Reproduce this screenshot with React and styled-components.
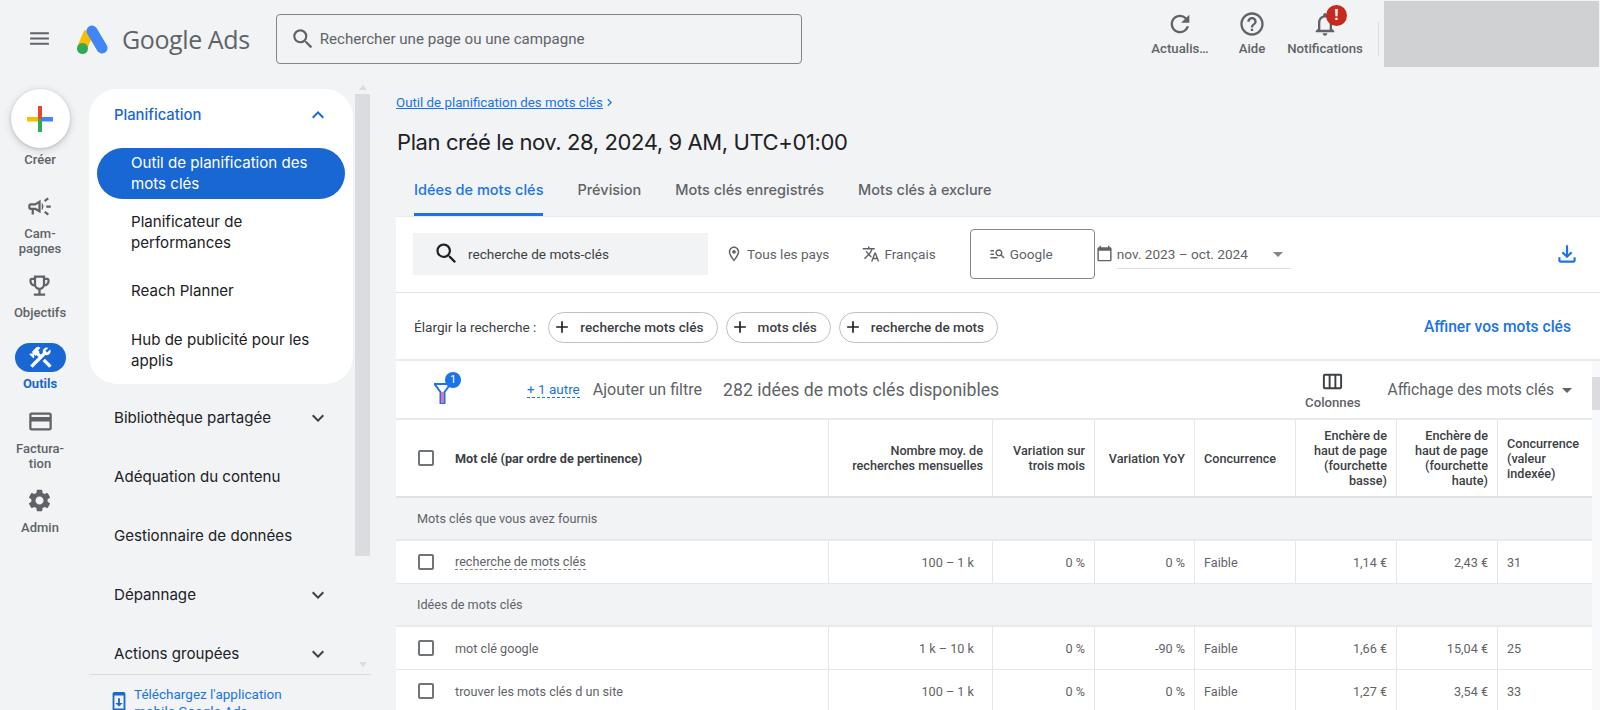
import React from 'react';
import styled, { createGlobalStyle } from 'styled-components';
import {
  MdMenu,
  MdSearch,
  MdRefresh,
  MdHelpOutline,
  MdOutlineNotifications,
  MdOutlineCampaign,
  MdOutlineEmojiEvents,
  MdConstruction,
  MdCreditCard,
  MdSettings,
  MdExpandLess,
  MdExpandMore,
  MdSystemUpdate,
  MdChevronRight,
  MdOutlineLocationOn,
  MdTranslate,
  MdOutlineManageSearch,
  MdCalendarToday,
  MdArrowDropDown,
  MdOutlineFileDownload,
  MdAdd,
  MdOutlineViewWeek,
} from 'react-icons/md';

const GlobalStyle = createGlobalStyle`
  html, body {
    margin: 0;
    padding: 0;
    height: 100%;
    overflow: hidden;
    background: #f1f3f5;
    font-family: Roboto, "Liberation Sans", sans-serif;
  }
  * { box-sizing: border-box; }
`;

const TITLE_FONT = `Inter, "Noto Sans", Roboto, sans-serif`;

const Page = styled.div`
  width: 1600px;
  height: 710px;
  overflow: hidden;
  display: flex;
  flex-direction: column;
  background: #f1f3f5;
`;

/* top bar */
const TopBar = styled.header`
  height: 68px;
  flex: none;
  display: flex;
  align-items: center;
  padding-left: 27px;
`;

const MenuButton = styled.div`
  display: flex;
  color: #5f6368;
  font-size: 25px;
  margin-top: 9px;
`;

const LogoWrap = styled.div`
  display: flex;
  align-items: center;
  margin-left: 25px;
  margin-top: 9px;
`;

const LogoText = styled.span`
  font-family: "Open Sans", sans-serif;
  font-size: 25px;
  font-weight: 500;
  letter-spacing: -0.4px;
  color: #5f6368;
  margin-left: 13px;
`;

const SearchBox = styled.div`
  width: 526px;
  height: 50px;
  margin-left: 26px;
  margin-top: 10px;
  border: 1px solid #80868b;
  border-radius: 4px;
  display: flex;
  align-items: center;
  padding-left: 13px;
  color: #5f6368;
  font-size: 15.1px;
  gap: 4px;
`;

const TopActions = styled.div`
  margin-left: auto;
  display: flex;
  align-items: flex-start;
  height: 100%;
  padding-top: 1px;
`;

const TopAction = styled.div`
  position: relative;
  width: ${(p) => p.$w}px;
  margin-top: 9px;
  display: flex;
  flex-direction: column;
  align-items: center;
  color: #5f6368;
  font-size: 13.2px;
  font-weight: 500;
  line-height: 16px;
  gap: 3px;
  svg { font-size: 28px; }
`;

const AlertBadge = styled.span`
  position: absolute;
  top: -5px;
  left: 40px;
  width: 21px;
  height: 21px;
  border-radius: 50%;
  background: #c5291f;
  color: #fff;
  font-size: 14px;
  font-weight: 900;
  line-height: 21px;
  text-align: center;
`;

const TopDivider = styled.div`
  width: 1px;
  height: 34px;
  margin: 21px 5px 0 14px;
  background: #dadce0;
`;

const AccountBlock = styled.div`
  width: 215px;
  height: 66px;
  margin-right: 1px;
  background: #d0d1d3;
`;

/* body */
const Body = styled.div`
  flex: 1;
  min-height: 0;
  display: flex;
`;

const Rail = styled.nav`
  width: 78px;
  flex: none;
  padding-top: 21px;
  margin-left: 1px;
  display: flex;
  flex-direction: column;
  align-items: center;
  gap: 17px;
`;

const CreateItem = styled.div`
  display: flex;
  flex-direction: column;
  align-items: center;
  gap: 4px;
  margin-bottom: 10px;
`;

const CreateButton = styled.div`
  width: 59px;
  height: 59px;
  border-radius: 50%;
  background: #fff;
  display: flex;
  align-items: center;
  justify-content: center;
  box-shadow: 0 1px 3px rgba(60, 64, 67, 0.22), 0 2px 6px 2px rgba(60, 64, 67, 0.12);
`;

const RailItem = styled.div`
  display: flex;
  flex-direction: column;
  align-items: center;
  gap: ${(p) => (p.$active ? 4 : 8)}px;
  margin-top: ${(p) => (p.$active ? 6 : 0)}px;
  margin-bottom: ${(p) => (p.$active ? 1 : 0)}px;
  color: #5f6368;
  svg { font-size: 27px; display: block; }
`;

const RailLabel = styled.span`
  font-size: 13px;
  line-height: 15px;
  text-align: center;
  color: ${(p) => (p.$active ? '#1967d2' : '#5f6368')};
  font-weight: ${(p) => (p.$active ? 700 : 500)};
`;

const IconBox = styled.div`
  height: 24px;
  display: flex;
  align-items: center;
  justify-content: center;
`;

const ActivePill = styled.div`
  width: 51px;
  height: 29px;
  border-radius: 15px;
  background: #1967d2;
  color: #fff;
  display: flex;
  align-items: center;
  justify-content: center;
`;

/* secondary nav */
const NavColumn = styled.div`
  width: 282px;
  flex: none;
  margin-left: 10px;
  display: flex;
  flex-direction: column;
`;

const NavTop = styled.div`
  height: 606px;
  flex: none;
  display: flex;
  overflow: hidden;
`;

const NavItems = styled.div`
  width: 264px;
  flex: none;
  padding-top: 21px;
  font-family: ${TITLE_FONT};
`;

const NavCard = styled.div`
  background: #fff;
  border-radius: 28px;
  padding-bottom: 8px;
`;

const NavHead = styled.div`
  height: 51px;
  margin-bottom: 8px;
  display: flex;
  align-items: center;
  justify-content: space-between;
  padding: 0 23px 0 25px;
  font-size: 14.8px;
  font-weight: 500;
  color: #1967d2;
  svg { font-size: 24px; }
`;

const SubItem = styled.div`
  height: 51px;
  margin: 0 8px 8px;
  padding: 0 20px 2px 34px;
  border-radius: 26px;
  display: flex;
  align-items: center;
  font-size: 15.1px;
  line-height: 21px;
  color: ${(p) => (p.$active ? '#fff' : '#202124')};
  background: ${(p) => (p.$active ? '#1967d2' : 'transparent')};
  &:last-child { margin-bottom: 0; }
`;

const NavRow = styled.div`
  height: 59px;
  display: flex;
  align-items: center;
  justify-content: space-between;
  padding: 0 23px 0 25px;
  font-size: 15.1px;
  color: #202124;
  svg { font-size: 24px; color: #3c4043; }
`;

const NavRows = styled.div`
  margin-top: 4px;
`;

const NavScroll = styled.div`
  width: 15px;
  margin-left: 2px;
  padding-top: 17px;
  display: flex;
  flex-direction: column;
  align-items: center;
`;

const ScrollArrow = styled.div`
  width: 0;
  height: 0;
  border-left: 4px solid transparent;
  border-right: 4px solid transparent;
  border-bottom: ${(p) => (p.$up ? '5px solid #dadce0' : 'none')};
  border-top: ${(p) => (p.$up ? 'none' : '5px solid #dadce0')};
`;

const NavThumb = styled.div`
  width: 15px;
  height: 462px;
  margin: 4px 0 106px;
  background: #dadce0;
`;

const NavFooter = styled.div`
  border-top: 1px solid #dadce0;
  padding: 11px 0 0 19px;
  display: flex;
  gap: 4px;
  color: #1a73e8;
  font-size: 13.5px;
  line-height: 17px;
  svg { font-size: 22px; margin-top: 5px; flex: none; color: #1967d2; }
`;

/* main */
const Main = styled.main`
  flex: 1;
  min-width: 0;
  margin-left: 25px;
  display: flex;
  flex-direction: column;
`;

const Breadcrumb = styled.div`
  margin-top: 25px;
  height: 18px;
  display: flex;
  align-items: center;
  font-size: 13.3px;
  color: #1a73e8;
  span { text-decoration: underline; }
  svg { font-size: 15px; margin-left: -1px; }
`;

const PageTitle = styled.h1`
  margin: 15px 0 0 1px;
  font-family: ${TITLE_FONT};
  font-size: 22px;
  letter-spacing: -0.4px;
  font-weight: 400;
  line-height: 32px;
  color: #202124;
`;

const Tabs = styled.div`
  margin-top: 10px;
  height: 48px;
  flex: none;
  display: flex;
  gap: 34px;
  padding-left: 18px;
`;

const Tab = styled.div`
  height: 48px;
  padding-bottom: 3px;
  display: flex;
  align-items: center;
  font-family: ${TITLE_FONT};
  font-size: 14.5px;
  font-weight: 500;
  color: ${(p) => (p.$active ? '#1a73e8' : '#5f6368')};
  border-bottom: 3px solid ${(p) => (p.$active ? '#1a73e8' : 'transparent')};
`;

const Panel = styled.section`
  flex: 1;
  min-height: 0;
  background: #fff;
  border-top: 1px solid #e8eaed;
  display: flex;
  flex-direction: column;
`;

const FilterBar = styled.div`
  height: 76px;
  flex: none;
  display: flex;
  align-items: center;
  padding: 0 0 2px 17px;
  border-bottom: 1px solid #e0e2e5;
  color: #5f6368;
  font-size: 13.6px;
`;

const KeywordInput = styled.div`
  width: 295px;
  height: 42px;
  background: #f1f3f4;
  display: flex;
  align-items: center;
  padding-left: 20px;
  gap: 8px;
  color: #3c4043;
  svg { font-size: 27px; color: #202124; }
`;

const FilterChip = styled.div`
  display: flex;
  align-items: center;
  gap: 4px;
  margin-left: ${(p) => p.$ml}px;
  svg { font-size: 18px; }
`;

const NetworkBox = styled.div`
  width: 125px;
  height: 50px;
  margin-left: 34px;
  border: 1px solid #80868b;
  border-radius: 4px;
  display: flex;
  align-items: center;
  gap: 4px;
  padding-left: 18px;
  svg { font-size: 17px; }
`;

const DatePicker = styled.div`
  display: flex;
  align-items: center;
  margin-left: 1px;
  svg { font-size: 17px; }
`;

const DateField = styled.div`
  width: 174px;
  height: 26px;
  margin-left: 4px;
  margin-top: 4px;
  border-bottom: 1px solid #dadce0;
  display: flex;
  align-items: center;
  justify-content: space-between;
  padding-right: 1px;
  padding-bottom: 3px;
  svg { font-size: 24px; color: #80868b; }
`;

const DownloadButton = styled.div`
  margin-left: auto;
  margin-right: 20px;
  display: flex;
  color: #1a73e8;
  font-size: 26px;
`;

const BroadenBar = styled.div`
  height: 66px;
  flex: none;
  display: flex;
  align-items: center;
  padding: 2px 29px 0 18px;
  color: #3c4043;
  font-size: 13.6px;
`;

const BroadenChip = styled.div`
  height: 31px;
  margin-left: ${(p) => p.$ml}px;
  border: 1px solid #bdc1c6;
  border-radius: 16px;
  display: flex;
  align-items: center;
  gap: 8px;
  padding: 0 13px 0 3px;
  font-weight: 500;
  color: #3c4043;
  svg { font-size: 20px; color: #202124; }
`;

const RefineLink = styled.div`
  margin-left: auto;
  color: #1a73e8;
  font-size: 15.6px;
  font-weight: 500;
`;

const TableArea = styled.div`
  flex: 1;
  min-height: 0;
  display: flex;
  border-top: 2px solid #e8eaed;
  overflow: hidden;
`;

const TableCol = styled.div`
  width: 1196px;
  flex: none;
`;

const ResultsBar = styled.div`
  height: 59px;
  display: flex;
  align-items: center;
  border-bottom: 2px solid #e8eaed;
  color: #5f6368;
  font-size: 15.6px;
`;

const FilterIcon = styled.div`
  position: relative;
  margin-left: 38px;
  margin-top: 8px;
  display: flex;
`;

const CountBadge = styled.span`
  position: absolute;
  top: -11px;
  left: 11px;
  width: 16px;
  height: 16px;
  border-radius: 50%;
  background: #1a73e8;
  color: #fff;
  font-size: 11px;
  line-height: 16px;
  text-align: center;
`;

const MoreLink = styled.span`
  margin-left: 76px;
  color: #1a73e8;
  font-size: 13.5px;
  border-bottom: 1px dashed #1a73e8;
`;

const AddFilter = styled.span`
  margin-left: 13px;
  font-size: 16.1px;
  color: #5f6368;
`;

const ResultCount = styled.span`
  margin-left: 21px;
  font-size: 17.7px;
  font-weight: 400;
  color: #5f6368;
`;

const ColumnsButton = styled.div`
  margin-left: auto;
  margin-right: 27px;
  display: flex;
  flex-direction: column;
  align-items: center;
  font-size: 13.2px;
  font-weight: 500;
  line-height: 14px;
  svg { font-size: 23px; color: #3c4043; margin-bottom: 3px; }
`;

const ViewSelect = styled.div`
  display: flex;
  align-items: center;
  margin-right: 13px;
  svg { font-size: 24px; margin-left: 1px; color: #5f6368; }
`;

const Row = styled.div`
  display: grid;
  grid-template-columns: 433px 164px 102px 100px 101px 101px 101px 94px;
  height: ${(p) => p.$h || 43}px;
  border-bottom: ${(p) => (p.$head ? '2px solid #dfe1e5' : '1px solid #e4e6e8')};
  font-size: 12.65px;
  line-height: 15px;
  color: ${(p) => (p.$head ? '#3c4043' : '#5f6368')};
  font-weight: ${(p) => (p.$head ? 500 : 400)};
`;

const Cell = styled.div`
  display: flex;
  align-items: center;
  justify-content: ${(p) => (p.$right ? 'flex-end' : 'flex-start')};
  text-align: ${(p) => (p.$right ? 'right' : 'left')};
  padding: 0 ${(p) => p.$pr || 9}px 0 9px;
  border-right: 1px solid #e4e6e8;
  &:last-child { border-right: none; }
`;

const KeywordCell = styled(Cell)`
  padding-left: 22px;
  gap: 21px;
`;

const Checkbox = styled.div`
  width: 16px;
  height: 16px;
  flex: none;
  border: 2px solid #70757a;
  border-radius: 2px;
`;

const HeadKeyword = styled.span`
  font-weight: 700;
  color: #3c4043;
`;

const DottedText = styled.span`
  border-bottom: 1px dashed #80868b;
`;

const GroupRow = styled.div`
  height: ${(p) => p.$h}px;
  background: #f1f3f5;
  border-bottom: 2px solid #e8eaed;
  display: flex;
  align-items: center;
  padding-left: 21px;
  font-size: 12.65px;
  color: #5f6368;
`;

const TableScroll = styled.div`
  width: 8px;
  flex: none;
  padding-top: 16px;
  background: #f8f9fa;
`;

const TableThumb = styled.div`
  height: 33px;
  background: #dadce0;
`;

const GoogleAdsLogo = () => (
  <svg width="32" height="30" viewBox="0 0 32 30">
    <line x1="12" y1="8" x2="5" y2="24" stroke="#fbbc04" strokeWidth="10" />
    <line x1="15" y1="7" x2="25" y2="24" stroke="#4285f4" strokeWidth="11" strokeLinecap="round" />
    <circle cx="5.5" cy="24.5" r="5.5" fill="#34a853" />
  </svg>
);

const PlusLogo = () => (
  <svg width="26" height="26" viewBox="0 0 26 26">
    <rect x="0" y="11" width="13" height="4.5" fill="#fbbc04" />
    <rect x="13" y="11" width="13" height="4.5" fill="#4285f4" />
    <rect x="11" y="0" width="4" height="13" fill="#ea4335" />
    <rect x="11" y="13" width="4" height="13" fill="#34a853" />
  </svg>
);

const FunnelGlyph = () => (
  <svg width="17" height="21" viewBox="0 0 17 21">
    <path d="M0.5 1 H16.5 L10.5 9 V20 H6.5 V9 Z" fill="none" stroke="#1a73e8" strokeWidth="2" />
    <rect x="7" y="9" width="3" height="11" fill="#e46fb0" />
  </svg>
);

const railItems = [
  { label: <>Cam-<br />pagnes</>, icon: <MdOutlineCampaign /> },
  { label: 'Objectifs', icon: <MdOutlineEmojiEvents /> },
  { label: 'Outils', icon: <MdConstruction />, active: true },
  { label: <>Factura-<br />tion</>, icon: <MdCreditCard /> },
  { label: 'Admin', icon: <MdSettings /> },
];

const navRows = [
  { label: 'Bibliothèque partagée', more: true },
  { label: 'Adéquation du contenu' },
  { label: 'Gestionnaire de données' },
  { label: 'Dépannage', more: true },
  { label: 'Actions groupées', more: true },
];

const headers = [
  'Nombre moy. de recherches mensuelles',
  'Variation sur trois mois',
  'Variation YoY',
  'Concurrence',
  'Enchère de haut de page (fourchette basse)',
  'Enchère de haut de page (fourchette haute)',
  'Concurrence (valeur indexée)',
];

const leftColumns = [3, 6];

const KeywordRow = ({ name, values, dashed, h }) => (
  <Row $h={h}>
    <KeywordCell>
      <Checkbox />
      {dashed ? <DottedText>{name}</DottedText> : <span>{name}</span>}
    </KeywordCell>
    {values.map((v, i) => (
      <Cell key={i} $right={!leftColumns.includes(i)} $pr={i === 0 ? 18 : 9}>
        {v}
      </Cell>
    ))}
  </Row>
);

export default function App() {
  return (
    <Page>
      <GlobalStyle />
      <TopBar>
        <MenuButton><MdMenu /></MenuButton>
        <LogoWrap>
          <GoogleAdsLogo />
          <LogoText>Google Ads</LogoText>
        </LogoWrap>
        <SearchBox>
          <MdSearch size={26} />
          <span>Rechercher une page ou une campagne</span>
        </SearchBox>
        <TopActions>
          <TopAction $w={76}><MdRefresh /><span>Actualis…</span></TopAction>
          <TopAction $w={68}><MdHelpOutline /><span>Aide</span></TopAction>
          <TopAction $w={78}>
            <MdOutlineNotifications />
            <AlertBadge>!</AlertBadge>
            <span>Notifications</span>
          </TopAction>
          <TopDivider />
          <AccountBlock />
        </TopActions>
      </TopBar>

      <Body>
        <Rail>
          <CreateItem>
            <CreateButton><PlusLogo /></CreateButton>
            <RailLabel>Créer</RailLabel>
          </CreateItem>
          {railItems.map((item, i) => (
            <RailItem key={i} $active={item.active}>
              {item.active ? (
                <ActivePill>{item.icon}</ActivePill>
              ) : (
                <IconBox>{item.icon}</IconBox>
              )}
              <RailLabel $active={item.active}>{item.label}</RailLabel>
            </RailItem>
          ))}
        </Rail>

        <NavColumn>
          <NavTop>
            <NavItems>
              <NavCard>
                <NavHead>Planification <MdExpandLess /></NavHead>
                <SubItem $active>Outil de planification des mots clés</SubItem>
                <SubItem>Planificateur de performances</SubItem>
                <SubItem>Reach Planner</SubItem>
                <SubItem>Hub de publicité pour les applis</SubItem>
              </NavCard>
              <NavRows>
                {navRows.map((row) => (
                  <NavRow key={row.label}>
                    {row.label}
                    {row.more && <MdExpandMore />}
                  </NavRow>
                ))}
              </NavRows>
            </NavItems>
            <NavScroll>
              <ScrollArrow $up />
              <NavThumb />
              <ScrollArrow />
            </NavScroll>
          </NavTop>
          <NavFooter>
            <MdSystemUpdate />
            <span>Téléchargez l'application<br />mobile Google Ads</span>
          </NavFooter>
        </NavColumn>

        <Main>
          <Breadcrumb>
            <span>Outil de planification des mots clés</span>
            <MdChevronRight />
          </Breadcrumb>
          <PageTitle>Plan créé le nov. 28, 2024, 9 AM, UTC+01:00</PageTitle>
          <Tabs>
            <Tab $active>Idées de mots clés</Tab>
            <Tab>Prévision</Tab>
            <Tab>Mots clés enregistrés</Tab>
            <Tab>Mots clés à exclure</Tab>
          </Tabs>
          <Panel>
            <FilterBar>
              <KeywordInput>
                <MdSearch />
                <span>recherche de mots-clés</span>
              </KeywordInput>
              <FilterChip $ml={17}><MdOutlineLocationOn />Tous les pays</FilterChip>
              <FilterChip $ml={33}><MdTranslate />Français</FilterChip>
              <NetworkBox><MdOutlineManageSearch />Google</NetworkBox>
              <DatePicker>
                <MdCalendarToday />
                <DateField>nov. 2023 – oct. 2024 <MdArrowDropDown /></DateField>
              </DatePicker>
              <DownloadButton><MdOutlineFileDownload /></DownloadButton>
            </FilterBar>
            <BroadenBar>
              Élargir la recherche :
              <BroadenChip $ml={12}><MdAdd />recherche mots clés</BroadenChip>
              <BroadenChip $ml={8}><MdAdd />mots clés</BroadenChip>
              <BroadenChip $ml={8}><MdAdd />recherche de mots</BroadenChip>
              <RefineLink>Affiner vos mots clés</RefineLink>
            </BroadenBar>
            <TableArea>
              <TableCol>
                <ResultsBar>
                  <FilterIcon>
                    <FunnelGlyph />
                    <CountBadge>1</CountBadge>
                  </FilterIcon>
                  <MoreLink>+ 1 autre</MoreLink>
                  <AddFilter>Ajouter un filtre</AddFilter>
                  <ResultCount>282 idées de mots clés disponibles</ResultCount>
                  <ColumnsButton>
                    <MdOutlineViewWeek />
                    Colonnes
                  </ColumnsButton>
                  <ViewSelect>Affichage des mots clés <MdArrowDropDown /></ViewSelect>
                </ResultsBar>
                <Row $head $h={78}>
                  <KeywordCell>
                    <Checkbox />
                    <HeadKeyword>Mot clé (par ordre de pertinence)</HeadKeyword>
                  </KeywordCell>
                  {headers.map((h, i) => (
                    <Cell key={h} $right={!leftColumns.includes(i)}>{h}</Cell>
                  ))}
                </Row>
                <GroupRow $h={43}>Mots clés que vous avez fournis</GroupRow>
                <KeywordRow
                  dashed
                  name="recherche de mots clés"
                  values={['100 – 1 k', '0 %', '0 %', 'Faible', '1,14 €', '2,43 €', '31']}
                />
                <GroupRow $h={43}>Idées de mots clés</GroupRow>
                <KeywordRow
                  name="mot clé google"
                  values={['1 k – 10 k', '0 %', '-90 %', 'Faible', '1,66 €', '15,04 €', '25']}
                />
                <KeywordRow
                  name="trouver les mots clés d un site"
                  values={['100 – 1 k', '0 %', '0 %', 'Faible', '1,27 €', '3,54 €', '33']}
                />
              </TableCol>
              <TableScroll><TableThumb /></TableScroll>
            </TableArea>
          </Panel>
        </Main>
      </Body>
    </Page>
  );
}
